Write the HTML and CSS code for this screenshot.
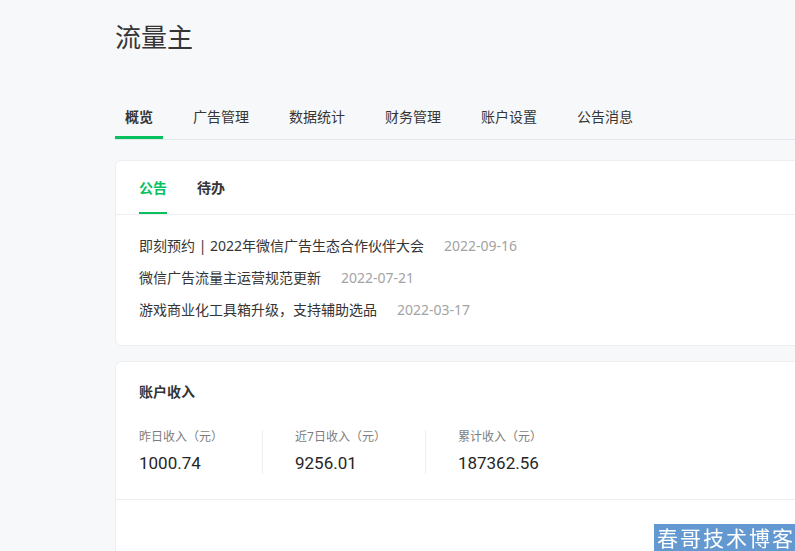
FILE: index.html
```html
<!DOCTYPE html>
<html lang="zh-CN">
<head>
<meta charset="utf-8">
<title>流量主</title>
<link rel="stylesheet" href="styles.css">
</head>
<body>
<div class="page">
  <h1 class="title">流量主</h1>
  <nav class="tabs">
    <a class="tab active">概览</a>
    <a class="tab">广告管理</a>
    <a class="tab">数据统计</a>
    <a class="tab">财务管理</a>
    <a class="tab">账户设置</a>
    <a class="tab">公告消息</a>
  </nav>

  <section class="card notice">
    <div class="subtabs">
      <a class="subtab active">公告</a>
      <a class="subtab">待办</a>
    </div>
    <ul class="notice-list">
      <li><span class="notice-title">即刻预约 | 2022年微信广告生态合作伙伴大会</span><span class="notice-date">2022-09-16</span></li>
      <li><span class="notice-title">微信广告流量主运营规范更新</span><span class="notice-date">2022-07-21</span></li>
      <li><span class="notice-title">游戏商业化工具箱升级，支持辅助选品</span><span class="notice-date">2022-03-17</span></li>
    </ul>
  </section>

  <section class="card income">
    <div class="income-head">
      <h2 class="card-title">账户收入</h2>
      <div class="stats">
        <div class="stat">
          <div class="stat-label">昨日收入（元）</div>
          <div class="stat-value">1000.74</div>
        </div>
        <div class="stat">
          <div class="stat-label">近7日收入（元）</div>
          <div class="stat-value">9256.01</div>
        </div>
        <div class="stat">
          <div class="stat-label">累计收入（元）</div>
          <div class="stat-value">187362.56</div>
        </div>
      </div>
    </div>
    <div class="income-body"></div>
  </section>
</div>
<div class="watermark">春哥技术博客</div>
</body>
</html>
```
FILE: styles.css
```css
html, body {
  margin: 0;
  padding: 0;
  background: #f7f8fa;
  overflow: hidden;
  height: 551px;
}

body {
  font-family: "Noto Sans", "Noto Sans CJK SC", sans-serif;
  color: #353535;
}

.page {
  width: 1100px;
  padding-left: 115px;
}

.title {
  margin: 0;
  padding-top: 19px;
  font-size: 26px;
  font-weight: 400;
  line-height: 36px;
  color: #353535;
}

.tabs {
  display: flex;
  gap: 20px;
  margin-top: 40px;
  border-bottom: 1px solid #e4e6e9;
}

.tab {
  padding: 0 10px;
  height: 44px;
  line-height: 44px;
  font-size: 14px;
  color: #353535;
  box-sizing: border-box;
}

.tab.active {
  font-weight: 700;
  border-bottom: 3px solid #07c160;
}

.card {
  background: #fff;
  border: 1px solid #eceef1;
  border-radius: 6px;
}

.notice {
  margin-top: 20px;
}

.subtabs {
  display: flex;
  gap: 30px;
  padding: 0 23px;
  border-bottom: 1px solid #eceef1;
}

.subtab {
  height: 53px;
  line-height: 54px;
  font-size: 14px;
  font-weight: 700;
  color: #353535;
  box-sizing: border-box;
}

.subtab.active {
  color: #07c160;
  border-bottom: 2px solid #07c160;
}

.notice-list {
  list-style: none;
  margin: 0;
  padding: 15px 23px 19px;
}

.notice-list li {
  display: flex;
  gap: 20px;
  line-height: 32px;
  font-size: 14px;
}

.notice-title {
  color: #353535;
}

.notice-date {
  color: #a3a3a3;
}

.income {
  margin-top: 15px;
}

.income-head {
  padding: 18px 23px 25px;
  border-bottom: 1px solid #eceef1;
}

.card-title {
  margin: 0;
  font-size: 14px;
  font-weight: 700;
  line-height: 24px;
}

.stats {
  display: flex;
  margin-top: 26px;
}

.stat {
  padding: 0 39px 0 32px;
  border-left: 1px solid #eceef1;
}

.stat:first-child {
  padding-left: 0;
  border-left: 0;
}

.stat-label {
  font-size: 12px;
  line-height: 14px;
  color: #7d7d7d;
}

.stat-value {
  font-family: Roboto, "Noto Sans", sans-serif;
  font-size: 17px;
  line-height: 22px;
  color: #262626;
  margin-top: 8px;
}

.income-body {
  height: 60px;
}

.watermark {
  position: fixed;
  right: 0;
  bottom: 0;
  height: 27px;
  padding-left: 3px;
  background: #6399d0;
  color: #fff;
  font-family: "Noto Sans CJK SC", sans-serif;
  font-size: 21px;
  line-height: 27px;
  letter-spacing: 2px;
  white-space: nowrap;
}
```
